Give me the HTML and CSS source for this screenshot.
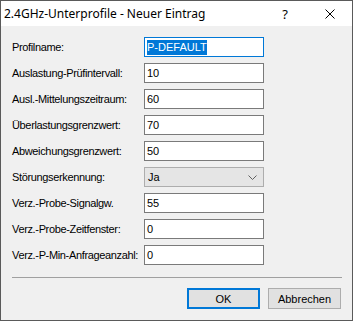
FILE: index.html
```html
<!DOCTYPE html>
<html lang="de">
<head>
  <meta charset="UTF-8" />
  <title>2.4GHz-Unterprofile - Neuer Eintrag</title>
  <link rel="stylesheet" href="styles.css">
</head>
<body>
  <div class="window">
    <div class="titlebar">
      <span class="title">2.4GHz-Unterprofile - Neuer Eintrag</span>
      <span class="help">?</span>
      <svg class="close" width="10" height="10" viewBox="0 0 10 10">
        <path d="M0.5 0.5 L9.5 9.5 M9.5 0.5 L0.5 9.5" stroke="#000" stroke-width="1" fill="none"/>
      </svg>
    </div>
    <div class="content">
      <div class="fields">
        <label class="lbl">Profilname:</label>
        <div class="box focus"><span class="sel">P-DEFAULT</span></div>

        <label class="lbl">Auslastung-Prüfintervall:</label>
        <div class="box">10</div>

        <label class="lbl">Ausl.-Mittelungszeitraum:</label>
        <div class="box">60</div>

        <label class="lbl">Überlastungsgrenzwert:</label>
        <div class="box">70</div>

        <label class="lbl">Abweichungsgrenzwert:</label>
        <div class="box">50</div>

        <label class="lbl">Störungserkennung:</label>
        <div class="box combo">
          <span>Ja</span>
          <svg class="chev" width="9" height="5" viewBox="0 0 9 5">
            <path d="M0.5 0.5 L4.5 4.5 L8.5 0.5" stroke="#606060" stroke-width="1" fill="none"/>
          </svg>
        </div>

        <label class="lbl">Verz.-Probe-Signalgw.</label>
        <div class="box">55</div>

        <label class="lbl">Verz.-Probe-Zeitfenster:</label>
        <div class="box">0</div>

        <label class="lbl">Verz.-P-Min-Anfrageanzahl:</label>
        <div class="box">0</div>
      </div>
      <div class="separator"></div>
      <div class="buttons">
        <button class="btn default">OK</button>
        <button class="btn">Abbrechen</button>
      </div>
    </div>
  </div>
</body>
</html>
```

FILE: styles.css
```css
body {
  margin: 0;
  padding: 0;
  background: #f0f0f0;
}
.window {
  width: 351px;
  height: 319px;
  border: 1px solid #5a5a5a;
  background: #f0f0f0;
  display: flex;
  flex-direction: column;
  font-family: "Liberation Sans", Arial, sans-serif;
  font-size: 11px;
  color: #000;
}
.titlebar {
  height: 25px;
  background: #fff;
  display: flex;
  align-items: center;
}
.title {
  font-family: "Noto Sans", "Open Sans", sans-serif;
  font-size: 12px;
  margin-left: 3px;
  flex: 1;
}
.help {
  font-family: "Noto Sans", sans-serif;
  font-size: 13px;
  margin-right: 37px;
}
.close {
  margin-right: 17px;
}
.content {
  flex: 1;
  padding: 11px 11px 0 11px;
  display: flex;
  flex-direction: column;
}
.fields {
  display: grid;
  grid-template-columns: 132px 120px;
  grid-auto-rows: 20px;
  row-gap: 6px;
  align-items: center;
}
.lbl {
  white-space: nowrap;
  letter-spacing: -0.35px;
}
.box {
  height: 18px;
  border: 1px solid #7a7a7a;
  background: #fff;
  padding-left: 2px;
  display: flex;
  align-items: center;
}
.box.focus {
  border-color: #0078d7;
}
.sel {
  background: #0078d7;
  color: #fff;
  line-height: 15px;
}
.box.combo {
  background: #e5e5e5;
  border-color: #adadad;
  justify-content: space-between;
  padding-left: 3px;
  padding-right: 6px;
}
.separator {
  margin-top: 12px;
  margin-right: -1px;
  border-top: 1px solid #a0a0a0;
}
.buttons {
  margin-top: 10px;
  display: flex;
  justify-content: flex-end;
  gap: 8px;
}
.btn {
  width: 73px;
  height: 21px;
  font-family: "Liberation Sans", Arial, sans-serif;
  font-size: 11px;
  background: #e1e1e1;
  border: 1px solid #adadad;
  padding: 0;
  color: #000;
}
.btn.default {
  border: 2px solid #0078d7;
}
```
